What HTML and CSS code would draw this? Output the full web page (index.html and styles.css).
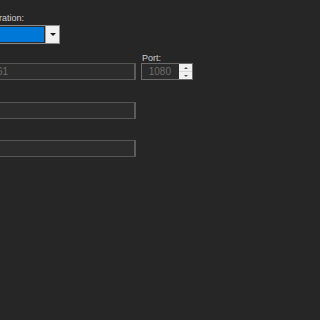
FILE: index.html
```html
<!DOCTYPE html>
<html lang="en">
<head>
    <meta charset="UTF-8">
    <title>Proxy settings</title>
    <link rel="stylesheet" href="styles.css">
</head>
<body>
    <div class="form">
        <div class="label cut">ration:</div>
        <div class="combo">
            <div class="combo-value"></div>
            <div class="combo-button"><span class="arrow"></span></div>
        </div>

        <div class="row">
            <div class="field">
                <div class="label small">&nbsp;</div>
                <div class="textbox disabled wide"><span class="clip">61</span></div>
            </div>
            <div class="field">
                <div class="label small">Port:</div>
                <div class="spin">
                    <div class="spin-value">1080</div>
                    <div class="spin-buttons">
                        <span class="up"></span>
                        <span class="down"></span>
                    </div>
                </div>
            </div>
        </div>

        <div class="textbox wide gap1"></div>
        <div class="textbox wide gap2"></div>
    </div>
</body>
</html>
```

FILE: styles.css
```css
* {
    margin: 0;
    padding: 0;
    box-sizing: border-box;
}

body {
    background: #262626;
    font-family: "Liberation Sans", Arial, sans-serif;
    font-size: 9px;
    color: #cfcfcf;
    overflow: hidden;
}

.form {
    padding-top: 10px;
    margin-left: -3px;
}

.label {
    height: 15px;
    line-height: 15px;
    white-space: nowrap;
}

.label.cut {
    margin-left: 2px;
    line-height: 16px;
}

.label.small {
    height: 10px;
    line-height: 10px;
    margin-left: 1px;
}

.combo {
    display: flex;
    width: 63px;
    height: 19px;
    border: 1px solid #8a8a8a;
    background: #f0f0f0;
}

.combo-value {
    width: 47px;
    height: 100%;
    border: 1px solid #2b2b2b;
    background: #0078d7;
}

.combo-button {
    flex: 1;
    display: flex;
    align-items: center;
    justify-content: center;
    border-left: 1px solid #a0a0a0;
}

.arrow {
    width: 0;
    height: 0;
    border-left: 3px solid transparent;
    border-right: 3px solid transparent;
    border-top: 3px solid #1a1a1a;
}

.row {
    display: flex;
    gap: 5px;
    margin-top: 9px;
}

.textbox {
    height: 17px;
    line-height: 15px;
    border: 1px solid #555;
    border-right: 2px solid #5c5c5c;
    background: #2c2c2c;
    color: #6e6e6e;
    white-space: nowrap;
    overflow: hidden;
}

.textbox.wide {
    width: 139px;
}

.clip {
    margin-left: -1px;
    font-size: 10px;
}

.textbox.gap1 {
    margin-top: 22px;
}

.textbox.gap2 {
    margin-top: 21px;
}

.spin {
    display: flex;
    width: 52px;
    height: 17px;
    border: 1px solid #6a6a6a;
    background: #2b2b2b;
}

.spin-value {
    flex: 1;
    line-height: 15px;
    font-size: 10px;
    text-align: right;
    padding-right: 8px;
    color: #6c6c6c;
}

.spin-buttons {
    width: 13px;
    display: flex;
    flex-direction: column;
    background: #f0f0f0;
}

.spin-buttons span {
    flex: 1;
    display: flex;
    align-items: center;
    justify-content: center;
}

.spin-buttons span::before {
    content: "";
    border-left: 2px solid transparent;
    border-right: 2px solid transparent;
}

.spin-buttons .up {
    border-bottom: 1px solid #d8d8d8;
}

.spin-buttons .up::before {
    border-bottom: 2px solid #555;
}

.spin-buttons .down::before {
    border-top: 2px solid #555;
}
```
